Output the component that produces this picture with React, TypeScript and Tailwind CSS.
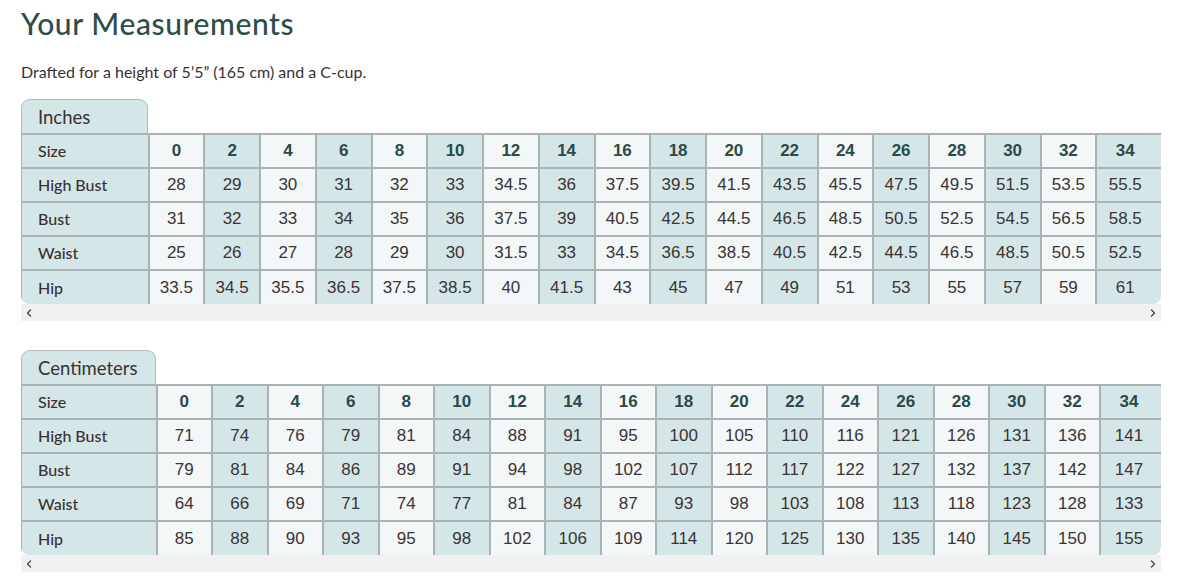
import { ChevronLeft, ChevronRight } from "lucide-react";

const sizes = [0, 2, 4, 6, 8, 10, 12, 14, 16, 18, 20, 22, 24, 26, 28, 30, 32, 34];

const inchRows: [string, (string | number)[]][] = [
  ["High Bust", [28, 29, 30, 31, 32, 33, 34.5, 36, 37.5, 39.5, 41.5, 43.5, 45.5, 47.5, 49.5, 51.5, 53.5, 55.5]],
  ["Bust", [31, 32, 33, 34, 35, 36, 37.5, 39, 40.5, 42.5, 44.5, 46.5, 48.5, 50.5, 52.5, 54.5, 56.5, 58.5]],
  ["Waist", [25, 26, 27, 28, 29, 30, 31.5, 33, 34.5, 36.5, 38.5, 40.5, 42.5, 44.5, 46.5, 48.5, 50.5, 52.5]],
  ["Hip", [33.5, 34.5, 35.5, 36.5, 37.5, 38.5, 40, 41.5, 43, 45, 47, 49, 51, 53, 55, 57, 59, 61]],
];

const cmRows: [string, (string | number)[]][] = [
  ["High Bust", [71, 74, 76, 79, 81, 84, 88, 91, 95, 100, 105, 110, 116, 121, 126, 131, 136, 141]],
  ["Bust", [79, 81, 84, 86, 89, 91, 94, 98, 102, 107, 112, 117, 122, 127, 132, 137, 142, 147]],
  ["Waist", [64, 66, 69, 71, 74, 77, 81, 84, 87, 93, 98, 103, 108, 113, 118, 123, 128, 133]],
  ["Hip", [85, 88, 90, 93, 95, 98, 102, 106, 109, 114, 120, 125, 130, 135, 140, 145, 150, 155]],
];

interface TableProps {
  title: string;
  labelWidth: string;
  colWidth: string;
  rows: [string, (string | number)[]][];
}

// one unit table: tab on top, clipped table, fake scrollbar under it
function SizeTable({ title, labelWidth, colWidth, rows }: TableProps) {
  const cellBg = (i: number) => (i % 2 === 0 ? "bg-[#f3f7f8]" : "bg-[#d5e6e8]");

  return (
    <div className="w-[1140px]">
      <div
        className={`${labelWidth} h-[34px] rounded-t-[9px] border border-b-0 border-[#b3bcbd] bg-[#d5e6e8] pl-[16px] pt-[4px] text-[18.5px] text-[#3b3131] font-['Lato',sans-serif]`}
      >
        {title}
      </div>

      <div className="overflow-hidden rounded-bl-[8px] rounded-br-[8px]">
        <table className="table-fixed border-collapse w-[1200px]">
          <colgroup>
            <col className={labelWidth} />
            {sizes.slice(0, 17).map((s) => (
              <col key={s} className={colWidth} />
            ))}
            <col />
          </colgroup>
          <tbody>
            <tr className="h-[34px]">
              <td className="border-2 border-l border-[#a9b3b4] bg-[#d5e6e8] pl-[16px] text-[16px] font-medium text-[#3b3131] font-['Lato',sans-serif]">
                Size
              </td>
              {sizes.map((s, i) => (
                <td
                  key={s}
                  className={`border-2 border-[#a9b3b4] ${cellBg(i)} text-[17px] font-bold text-[#2b4a48] font-['Liberation_Sans',Arial,sans-serif] ${i === 17 ? "text-left" : "text-center"}`}
                >
                  {i === 17 ? <span className="block w-[56px] text-center">{s}</span> : s}
                </td>
              ))}
            </tr>
            {rows.map(([label, vals], r) => {
              const last = r === rows.length - 1;
              return (
                <tr key={label} className="h-[34px]">
                  <td
                    className={`border-2 border-l border-[#a9b3b4] bg-[#d5e6e8] pl-[16px] text-[16px] font-medium text-[#3b3131] font-['Lato',sans-serif] ${last ? "border-b-0" : ""}`}
                  >
                    {label}
                  </td>
                  {vals.map((v, i) => (
                    <td
                      key={i}
                      className={`border-2 border-[#a9b3b4] ${cellBg(i)} text-[17px] text-[#3b3434] font-['Liberation_Sans',Arial,sans-serif] ${last ? "border-b-0" : ""} ${i === 17 ? "text-left" : "text-center"}`}
                    >
                      {i === 17 ? <span className="block w-[56px] text-center">{v}</span> : v}
                    </td>
                  ))}
                </tr>
              );
            })}
          </tbody>
        </table>
      </div>

      {/* scrollbar strip */}
      <div className="h-[17px] bg-[#f1f1f1] flex items-center justify-between px-[2px] text-[#505050]">
        <ChevronLeft size={12} strokeWidth={3} />
        <ChevronRight size={12} strokeWidth={3} />
      </div>
    </div>
  );
}

export default function App() {
  return (
    <div className="w-[1182px] h-[582px] bg-white pl-[21px] overflow-hidden font-['Lato',sans-serif]">
      <h1 className="pt-[3px] text-[30px] font-medium text-[#2d4d4b] tracking-[0.6px] leading-[40px]">
        Your Measurements
      </h1>
      <p className="mt-[19px] text-[16px] text-[#3b3131] leading-[20px]">
        Drafted for a height of 5’5” (165 cm) and a C-cup.
      </p>

      <div className="mt-[17px]">
        <SizeTable title="Inches" labelWidth="w-[127px]" colWidth="w-[55.76px]" rows={inchRows} />
      </div>

      <div className="mt-[29px]">
        <SizeTable title="Centimeters" labelWidth="w-[135px]" colWidth="w-[55.5px]" rows={cmRows} />
      </div>
    </div>
  );
}
